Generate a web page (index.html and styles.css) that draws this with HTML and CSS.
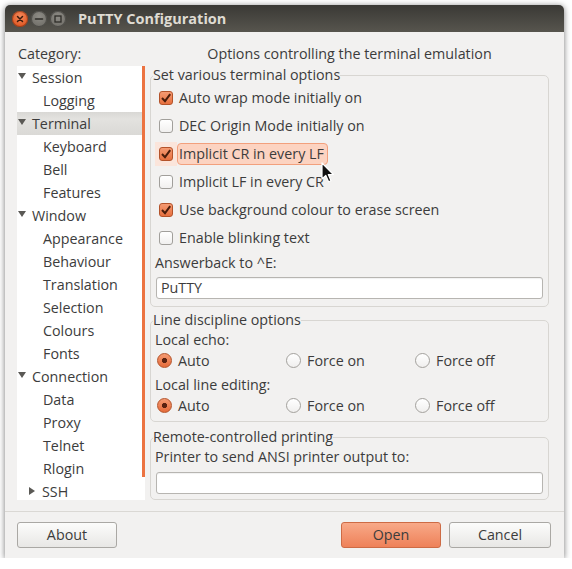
FILE: index.html
```html
<!DOCTYPE html>
<html lang="en">
<head>
<meta charset="utf-8">
<title>PuTTY Configuration</title>
<link rel="stylesheet" href="styles.css">
</head>
<body>
<div class="window">
  <div class="titlebar">
    <div class="wbtns">
      <span class="wbtn close"><svg width="16" height="16" viewBox="0 0 16 16"><path d="M5.5 5.5 L10.5 10.5 M10.5 5.5 L5.5 10.5" stroke="#3a1a0c" stroke-width="1.5" stroke-linecap="round"/></svg></span>
      <span class="wbtn grey"><svg width="16" height="16" viewBox="0 0 16 16"><path d="M4.5 8 H11.5" stroke="#2e2d29" stroke-width="1.6" stroke-linecap="round"/></svg></span>
      <span class="wbtn grey"><svg width="16" height="16" viewBox="0 0 16 16"><rect x="5" y="5" width="6" height="6" fill="none" stroke="#2e2d29" stroke-width="1.3"/></svg></span>
    </div>
    <div class="title">PuTTY Configuration</div>
  </div>

  <div class="heads">
    <div class="cat-label">Category:</div>
    <div class="panel-title">Options controlling the terminal emulation</div>
  </div>

  <div class="main">
    <div class="treebox">
      <ul class="tree">
        <li class="top"><span class="tri"></span>Session</li>
        <li class="child">Logging</li>
        <li class="top sel"><span class="tri"></span>Terminal</li>
        <li class="child">Keyboard</li>
        <li class="child">Bell</li>
        <li class="child">Features</li>
        <li class="top"><span class="tri"></span>Window</li>
        <li class="child">Appearance</li>
        <li class="child">Behaviour</li>
        <li class="child">Translation</li>
        <li class="child">Selection</li>
        <li class="child">Colours</li>
        <li class="child">Fonts</li>
        <li class="top"><span class="tri"></span>Connection</li>
        <li class="child">Data</li>
        <li class="child">Proxy</li>
        <li class="child">Telnet</li>
        <li class="child">Rlogin</li>
        <li class="sub"><span class="tri right"></span>SSH</li>
      </ul>
      <div class="scroll"><div class="thumb"></div></div>
    </div>

    <div class="panel">
      <fieldset class="group g1">
        <legend>Set various terminal options</legend>
        <div class="check"><span class="cbw"><span class="cb on"><svg width="14" height="14" viewBox="0 0 14 14"><path d="M3 7 L6 10.2 L11.2 3.2" fill="none" stroke="#4a1d0b" stroke-width="2"/></svg></span></span><span class="lbl">Auto wrap mode initially on</span></div>
        <div class="check"><span class="cbw"><span class="cb"></span></span><span class="lbl">DEC Origin Mode initially on</span></div>
        <div class="check hot"><span class="cbw"><span class="cb on"><svg width="14" height="14" viewBox="0 0 14 14"><path d="M3 7 L6 10.2 L11.2 3.2" fill="none" stroke="#4a1d0b" stroke-width="2"/></svg></span></span><span class="lbl">Implicit CR in every LF</span></div>
        <div class="check"><span class="cbw"><span class="cb"></span></span><span class="lbl">Implicit LF in every CR</span></div>
        <div class="check"><span class="cbw"><span class="cb on"><svg width="14" height="14" viewBox="0 0 14 14"><path d="M3 7 L6 10.2 L11.2 3.2" fill="none" stroke="#4a1d0b" stroke-width="2"/></svg></span></span><span class="lbl">Use background colour to erase screen</span></div>
        <div class="check"><span class="cbw"><span class="cb"></span></span><span class="lbl">Enable blinking text</span></div>
        <div class="flabel">Answerback to ^E:</div>
        <div class="entry">PuTTY</div>
      </fieldset>

      <fieldset class="group g2">
        <legend>Line discipline options</legend>
        <div class="flabel first">Local echo:</div>
        <div class="radios">
          <div class="radio"><span class="rb on"></span>Auto</div>
          <div class="radio"><span class="rb"></span>Force on</div>
          <div class="radio"><span class="rb"></span>Force off</div>
        </div>
        <div class="flabel second">Local line editing:</div>
        <div class="radios">
          <div class="radio"><span class="rb on"></span>Auto</div>
          <div class="radio"><span class="rb"></span>Force on</div>
          <div class="radio"><span class="rb"></span>Force off</div>
        </div>
      </fieldset>

      <fieldset class="group g3">
        <legend>Remote-controlled printing</legend>
        <div class="flabel first">Printer to send ANSI printer output to:</div>
        <div class="entry empty"></div>
      </fieldset>
    </div>
  </div>

  <div class="footer">
    <button class="btn">About</button>
    <button class="btn primary">Open</button>
    <button class="btn cancel">Cancel</button>
  </div>
</div>

<svg class="cursor" width="14" height="22" viewBox="0 0 14 22"><path d="M1 1 L1 17 L4.8 13.4 L7.6 19.8 L10 18.8 L7.3 12.5 L12.4 12.5 Z" fill="#111" stroke="#fff" stroke-width="1.2" stroke-linejoin="round"/></svg>
</body>
</html>
```

FILE: styles.css
```css
* { box-sizing: border-box; }

body {
  margin: 0;
  background: #ffffff;
  font-family: "Open Sans", "Noto Sans", "DejaVu Sans", sans-serif;
  font-size: 14.3px;
  color: #3c3c3c;
}

.window {
  width: 559px;
  height: 553px;
  margin: 5px 0 0 5px;
  background: #f2f1f0;
  border-radius: 5px 5px 0 0;
  box-shadow: 0 1px 6px rgba(0, 0, 0, 0.55);
  display: flex;
  flex-direction: column;
  overflow: hidden;
}

/* title bar */
.titlebar {
  height: 27px;
  flex: none;
  background: linear-gradient(#3a3935, #57554e);
  display: flex;
  align-items: center;
  padding-left: 7px;
}

.wbtns { display: flex; gap: 3px; }

.wbtn {
  width: 16px;
  height: 16px;
  border-radius: 50%;
  display: block;
}
.wbtn svg { display: block; }

.wbtn.close {
  background: radial-gradient(circle at 50% 35%, #f58b5e, #e05a26 70%, #c94a1b);
  box-shadow: inset 0 0 0 1px rgba(90, 30, 10, 0.45);
}
.wbtn.grey {
  background: radial-gradient(circle at 50% 35%, #8e8c86, #74726c 70%, #63615b);
  box-shadow: inset 0 0 0 1px rgba(30, 30, 28, 0.45);
}

.title {
  margin-left: 12px;
  font-weight: bold;
  font-size: 14.5px;
  color: #dfdbd2;
}

/* headings */
.heads {
  display: flex;
  margin: 12px 15px 0 12px;
  height: 20px;
  line-height: 20px;
}
.cat-label { width: 133px; padding-left: 1px; }
.panel-title { width: 399px; text-align: center; white-space: nowrap; }

/* main */
.main {
  display: flex;
  gap: 5px;
  margin: 2px 15px 0 12px;
  height: 434px;
}

.treebox {
  width: 128px;
  background: #ffffff;
  display: flex;
}

.tree {
  width: 125px;
  list-style: none;
  margin: 0;
  padding: 0;
}
.tree li {
  height: 23px;
  display: flex;
  align-items: center;
  white-space: nowrap;
}
.tree li.top { padding-left: 1px; }
.tree li.child { padding-left: 26px; }
.tree li.sub { padding-left: 12px; }
.tree li.sel { background: linear-gradient(#d9d8d5, #e3e2df 30%, #dad9d6); }

.tri {
  width: 0;
  height: 0;
  border-left: 4px solid transparent;
  border-right: 4px solid transparent;
  border-top: 6px solid #5a5955;
  margin-right: 6px;
  margin-top: -4px;
}
.tri.right {
  border-top: 4px solid transparent;
  border-bottom: 4px solid transparent;
  border-left: 6px solid #5a5955;
  border-right: 0;
  margin-right: 7px;
  margin-top: -2px;
}

.scroll { width: 3px; }
.thumb { height: 411px; background: #ec7341; }

/* right panel */
.panel {
  width: 399px;
  display: flex;
  flex-direction: column;
}

.group {
  margin: 0;
  padding: 0 5px 0 4px;
  border: 1px solid #d8d6d2;
  border-radius: 5px;
  min-width: 0;
}
.group legend {
  padding: 0;
  margin-left: -2px;
  line-height: 18px;
}
.g1 { padding-bottom: 7px; }
.g2 { margin-top: 4px; padding-bottom: 6px; }
.g3 { margin-top: 6px; padding-bottom: 5px; }

.check {
  height: 28px;
  display: flex;
  align-items: center;
}
.cbw {
  width: 22px;
  height: 24px;
  display: flex;
  align-items: center;
  padding-left: 4px;
}
.cb {
  width: 14px;
  height: 14px;
  border-radius: 3px;
  border: 1px solid #a19f9b;
  background: linear-gradient(#ffffff, #f1f0ef);
  display: block;
  position: relative;
}
.cb.on {
  border-color: #b4532a;
  background: linear-gradient(#f59a72, #e7703f);
}
.cb svg { position: absolute; left: -1px; top: -1px; }

.lbl {
  height: 22px;
  line-height: 20px;
  padding: 0 3px 0 1px;
  border: 1px solid transparent;
  border-radius: 4px;
  white-space: nowrap;
}
.check.hot .cbw { background: #fbe5db; }
.check.hot .lbl {
  background: #fcd3c1;
  border-color: #f2a07d;
}

.flabel {
  height: 20px;
  line-height: 20px;
  margin-top: 1px;
}
.flabel.second { margin-top: 5px; }

.entry {
  margin: 4px 0 0 1px;
  height: 22px;
  line-height: 20px;
  background: #ffffff;
  border: 1px solid #b7b5b1;
  border-radius: 3px;
  padding-left: 4px;
  box-shadow: inset 0 1px 1px rgba(0, 0, 0, 0.06);
}
.entry.empty { margin-top: 5px; }

.radios {
  display: grid;
  grid-template-columns: 129px 129px 129px;
  height: 20px;
  padding-left: 2px;
}
.radio {
  display: flex;
  align-items: center;
  white-space: nowrap;
}
.rb {
  width: 15px;
  height: 15px;
  border-radius: 50%;
  border: 1px solid #a3a19d;
  background: linear-gradient(#ffffff, #f0efee);
  margin-right: 6px;
  flex: none;
}
.rb.on {
  border-color: #b4532a;
  background: radial-gradient(circle, #5a2210 0 2.4px, transparent 2.9px), linear-gradient(#f59a72, #e56b3a);
}

/* footer */
.footer {
  margin-top: 11px;
  border-top: 1px solid #dad8d4;
  padding: 10px 13px 0 12px;
  display: flex;
}

.btn {
  width: 100px;
  height: 26px;
  font: inherit;
  color: #3c3c3c;
  border: 1px solid #aaa8a4;
  border-radius: 3px;
  background: linear-gradient(#fcfcfb, #e8e7e5);
  padding: 0;
  line-height: 24px;
}
.btn.primary {
  margin-left: auto;
  border-color: #cd6b45;
  background: linear-gradient(#f8a988, #ee8159);
}
.btn.cancel {
  width: 102px;
  margin-left: 8px;
}

.cursor {
  position: absolute;
  left: 321px;
  top: 162px;
}
```
